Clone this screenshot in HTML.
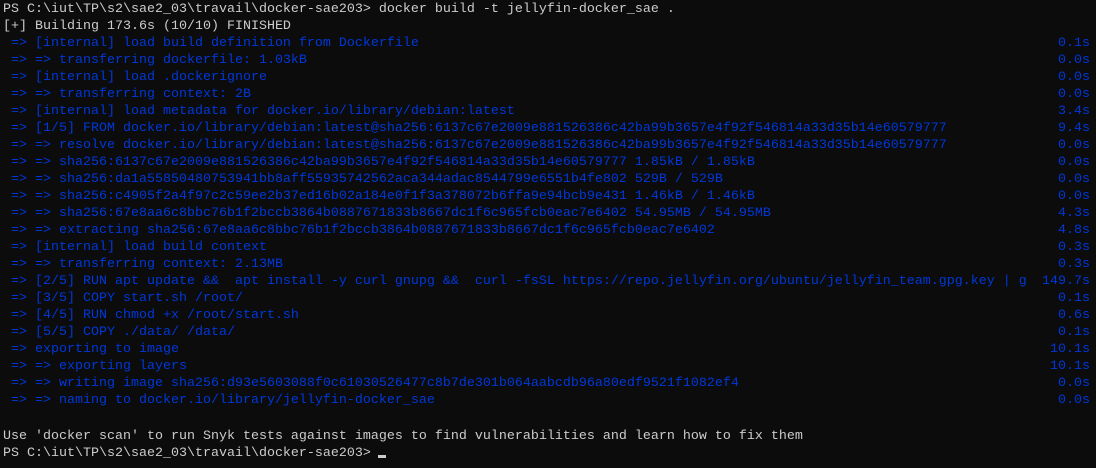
<!DOCTYPE html>
<html><head><meta charset="utf-8">
<style>
html,body{margin:0;padding:0;background:#0c0c0c;}
body{width:1096px;height:468px;overflow:hidden;position:relative;font-family:"Liberation Mono",monospace;font-size:13.33px;}
.l{position:absolute;left:3px;height:17px;line-height:17px;white-space:pre;color:#cccccc;margin-top:1px;}
.b{color:#0037da;}
.t{position:absolute;right:6px;height:17px;line-height:17px;white-space:pre;color:#0037da;margin-top:1px;}
.cur{position:absolute;left:378px;top:455px;width:8px;height:3px;background:#cccccc;}
</style></head><body>
<div class="l" style="top:0px">PS C:\iut\TP\s2\sae2_03\travail\docker-sae203&gt; docker build -t jellyfin-docker_sae .</div>
<div class="l" style="top:17px">[+] Building 173.6s (10/10) FINISHED</div>
<div class="l b" style="top:34px"> =&gt; [internal] load build definition from Dockerfile</div><div class="t" style="top:34px">0.1s</div>
<div class="l b" style="top:51px"> =&gt; =&gt; transferring dockerfile: 1.03kB</div><div class="t" style="top:51px">0.0s</div>
<div class="l b" style="top:68px"> =&gt; [internal] load .dockerignore</div><div class="t" style="top:68px">0.0s</div>
<div class="l b" style="top:85px"> =&gt; =&gt; transferring context: 2B</div><div class="t" style="top:85px">0.0s</div>
<div class="l b" style="top:102px"> =&gt; [internal] load metadata for docker.io/library/debian:latest</div><div class="t" style="top:102px">3.4s</div>
<div class="l b" style="top:119px"> =&gt; [1/5] FROM docker.io/library/debian:latest@sha256:6137c67e2009e881526386c42ba99b3657e4f92f546814a33d35b14e60579777</div><div class="t" style="top:119px">9.4s</div>
<div class="l b" style="top:136px"> =&gt; =&gt; resolve docker.io/library/debian:latest@sha256:6137c67e2009e881526386c42ba99b3657e4f92f546814a33d35b14e60579777</div><div class="t" style="top:136px">0.0s</div>
<div class="l b" style="top:153px"> =&gt; =&gt; sha256:6137c67e2009e881526386c42ba99b3657e4f92f546814a33d35b14e60579777 1.85kB / 1.85kB</div><div class="t" style="top:153px">0.0s</div>
<div class="l b" style="top:170px"> =&gt; =&gt; sha256:da1a55850480753941bb8aff55935742562aca344adac8544799e6551b4fe802 529B / 529B</div><div class="t" style="top:170px">0.0s</div>
<div class="l b" style="top:187px"> =&gt; =&gt; sha256:c4905f2a4f97c2c59ee2b37ed16b02a184e0f1f3a378072b6ffa9e94bcb9e431 1.46kB / 1.46kB</div><div class="t" style="top:187px">0.0s</div>
<div class="l b" style="top:204px"> =&gt; =&gt; sha256:67e8aa6c8bbc76b1f2bccb3864b0887671833b8667dc1f6c965fcb0eac7e6402 54.95MB / 54.95MB</div><div class="t" style="top:204px">4.3s</div>
<div class="l b" style="top:221px"> =&gt; =&gt; extracting sha256:67e8aa6c8bbc76b1f2bccb3864b0887671833b8667dc1f6c965fcb0eac7e6402</div><div class="t" style="top:221px">4.8s</div>
<div class="l b" style="top:238px"> =&gt; [internal] load build context</div><div class="t" style="top:238px">0.3s</div>
<div class="l b" style="top:255px"> =&gt; =&gt; transferring context: 2.13MB</div><div class="t" style="top:255px">0.3s</div>
<div class="l b" style="top:272px"> =&gt; [2/5] RUN apt update &amp;&amp;  apt install -y curl gnupg &amp;&amp;  curl -fsSL https://repo.jellyfin.org/ubuntu/jellyfin_team.gpg.key | g</div><div class="t" style="top:272px">149.7s</div>
<div class="l b" style="top:289px"> =&gt; [3/5] COPY start.sh /root/</div><div class="t" style="top:289px">0.1s</div>
<div class="l b" style="top:306px"> =&gt; [4/5] RUN chmod +x /root/start.sh</div><div class="t" style="top:306px">0.6s</div>
<div class="l b" style="top:323px"> =&gt; [5/5] COPY ./data/ /data/</div><div class="t" style="top:323px">0.1s</div>
<div class="l b" style="top:340px"> =&gt; exporting to image</div><div class="t" style="top:340px">10.1s</div>
<div class="l b" style="top:357px"> =&gt; =&gt; exporting layers</div><div class="t" style="top:357px">10.1s</div>
<div class="l b" style="top:374px"> =&gt; =&gt; writing image sha256:d93e5603088f0c61030526477c8b7de301b064aabcdb96a80edf9521f1082ef4</div><div class="t" style="top:374px">0.0s</div>
<div class="l b" style="top:391px"> =&gt; =&gt; naming to docker.io/library/jellyfin-docker_sae</div><div class="t" style="top:391px">0.0s</div>
<div class="l" style="top:427px">Use 'docker scan' to run Snyk tests against images to find vulnerabilities and learn how to fix them</div>
<div class="l" style="top:444px">PS C:\iut\TP\s2\sae2_03\travail\docker-sae203&gt; </div>
<div class="cur"></div>
</body></html>
